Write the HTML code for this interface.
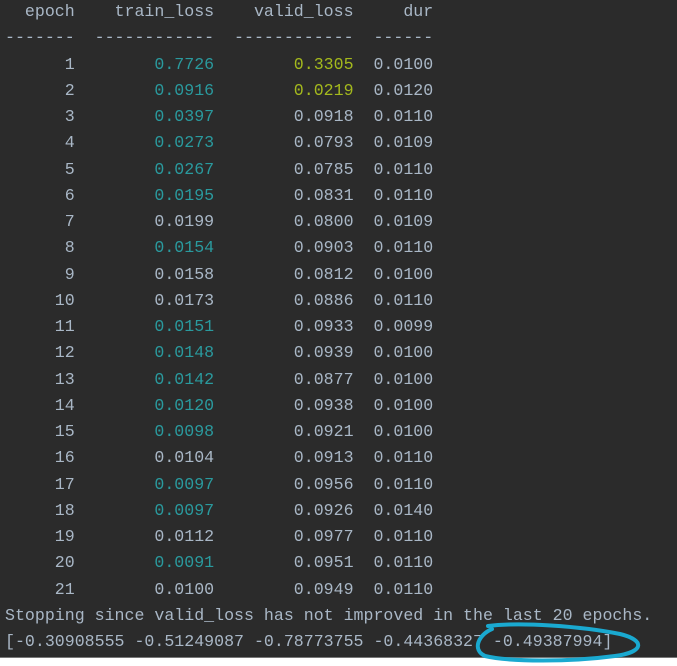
<!DOCTYPE html>
<html><head><style>
html,body{margin:0;padding:0;width:677px;height:666px;overflow:hidden;background:#fff}
#c{position:absolute;left:0;top:0;width:677px;height:657px;background:#2b2b2b;border-bottom:1px solid #777}
pre{position:absolute;left:5px;top:0;margin:0;font-family:"Liberation Mono",monospace;font-size:16.6px;line-height:26.25px;color:#a9b7c6;white-space:pre}
.t{color:#2a9a9e}.y{color:#a4b91d}
svg{position:absolute;left:0;top:0}
</style></head><body>
<div id="c"></div>
<pre style="top:-1px">  epoch    train_loss    valid_loss     dur
-------  ------------  ------------  ------
      1        <span class="t">0.7726</span>        <span class="y">0.3305</span>  0.0100
      2        <span class="t">0.0916</span>        <span class="y">0.0219</span>  0.0120
      3        <span class="t">0.0397</span>        0.0918  0.0110
      4        <span class="t">0.0273</span>        0.0793  0.0109
      5        <span class="t">0.0267</span>        0.0785  0.0110
      6        <span class="t">0.0195</span>        0.0831  0.0110
      7        0.0199        0.0800  0.0109
      8        <span class="t">0.0154</span>        0.0903  0.0110
      9        0.0158        0.0812  0.0100
     10        0.0173        0.0886  0.0110
     11        <span class="t">0.0151</span>        0.0933  0.0099
     12        <span class="t">0.0148</span>        0.0939  0.0100
     13        <span class="t">0.0142</span>        0.0877  0.0100
     14        <span class="t">0.0120</span>        0.0938  0.0100
     15        <span class="t">0.0098</span>        0.0921  0.0100
     16        0.0104        0.0913  0.0110
     17        <span class="t">0.0097</span>        0.0956  0.0110
     18        <span class="t">0.0097</span>        0.0926  0.0140
     19        0.0112        0.0977  0.0110
     20        <span class="t">0.0091</span>        0.0951  0.0110
     21        0.0100        0.0949  0.0110
Stopping since valid_loss has not improved in the last 20 epochs.
[-0.30908555 -0.51249087 -0.78773755 -0.44368327 -0.49387994]</pre>
<svg width="677" height="666"><path d="M488 626 C520 622 580 626 620 634 C645 640 645 652 615 656 C570 662 510 662 485 656 C472 650 478 635 492 629" fill="none" stroke="#1aa9d0" stroke-width="4" stroke-linecap="round"/></svg>
</body></html>
